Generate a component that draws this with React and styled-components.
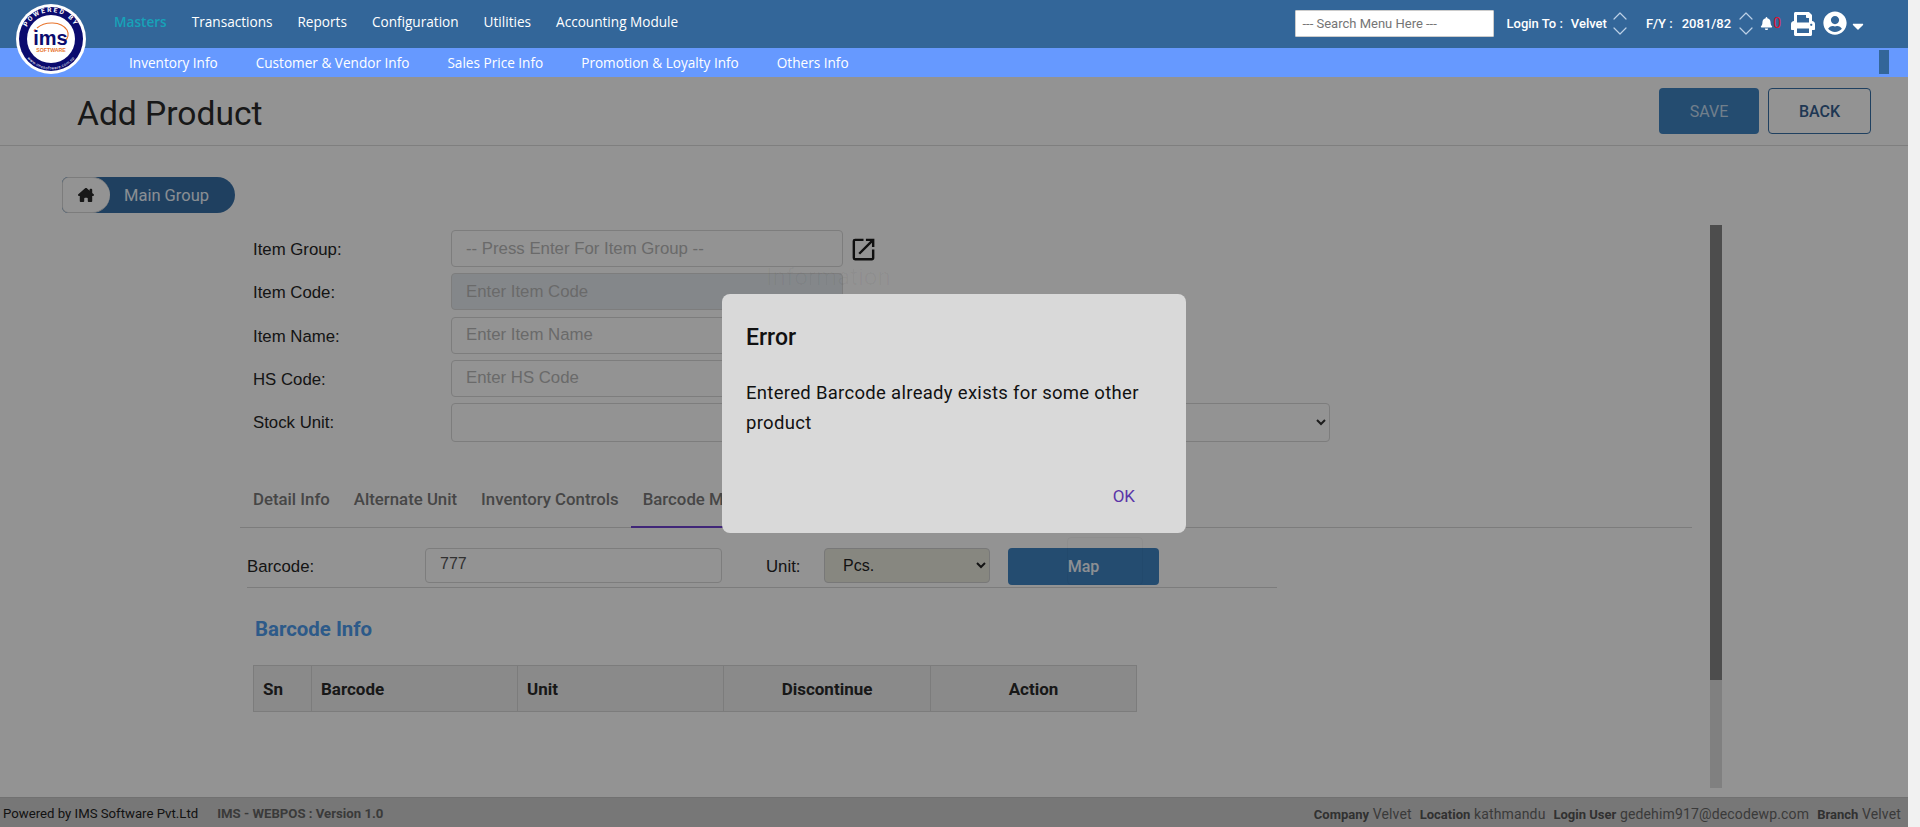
import React from "react";
import styled, { createGlobalStyle } from "styled-components";
import { FaBell, FaPrint, FaUserCircle, FaCaretDown } from "react-icons/fa";
import { FaHouseChimney } from "react-icons/fa6";
import { MdOpenInNew } from "react-icons/md";
import { LuChevronUp, LuChevronDown } from "react-icons/lu";

const Global = createGlobalStyle`
  html, body { margin: 0; padding: 0; background: #f1f1f1; overflow: hidden; }
  * { box-sizing: border-box; }
  body { font-family: Roboto, "Liberation Sans", sans-serif; }
`;

const Shell = styled.div`
  position: relative;
  width: 1908px;
  height: 827px;
  background: #fff;
  display: flex;
  flex-direction: column;
  overflow: hidden;
`;

const TopBar = styled.header`
  position: relative;
  z-index: 3;
  height: 48px;
  background: #336699;
  display: flex;
  align-items: center;
  padding: 0 41px 2px 114px;
  color: #fff;
`;

const LogoWrap = styled.div`
  position: absolute;
  left: 16px;
  top: 4px;
  width: 70px;
  height: 70px;
  z-index: 5;
`;

const MainNav = styled.nav`
  display: flex;
  gap: 25px;
  margin-top: -3px;
`;

const NavLink = styled.span`
  font-family: "Open Sans", sans-serif;
  font-size: 13.6px;
  font-weight: ${(p) => (p.$active ? 600 : 500)};
  color: ${(p) => (p.$active ? "#17a2b8" : "#fff")};
`;

const TopRight = styled.div`
  margin-left: auto;
  display: flex;
  align-items: center;
  font-size: 13px;
  font-weight: 500;
`;

const SearchBox = styled.input`
  width: 199px;
  height: 27px;
  border: 1px solid #ccc;
  border-radius: 1px;
  padding: 0 6px;
  font: 400 13px Roboto, sans-serif;
  color: #333;
  background: #fff;
  margin-right: 12px;
  &::placeholder { color: #757575; opacity: 1; }
`;

const Pair = styled.span`
  display: inline-flex;
  gap: ${(p) => p.$gap}px;
`;

const UpDown = styled.span`
  display: inline-flex;
  flex-direction: column;
  color: #bcd0e6;
  width: 16px;
  align-items: center;
  margin: 0 ${(p) => p.$right}px 0 ${(p) => p.$left}px;
  & svg { display: block; margin: -4.5px 0; stroke-width: 1.2; }
`;

const BellWrap = styled.span`
  display: inline-flex;
  align-items: center;
  margin-right: 10px;
  margin-left: 6px;
  font-size: 14px;
  font-weight: 400;
  color: #e0102f;
`;

const IconSlot = styled.span`
  display: inline-flex;
  color: #fff;
  margin-right: ${(p) => p.$gap || 0}px;
  margin-top: ${(p) => p.$top || 0}px;
`;

const SubBar = styled.div`
  position: relative;
  z-index: 3;
  height: 29px;
  background: #6699ff;
  display: flex;
  align-items: center;
  padding-left: 129px;
  gap: 38px;
  color: #fff;
`;

const SubLink = styled.span`
  font-family: "Open Sans", sans-serif;
  font-size: 13.6px;
  font-weight: 500;
`;

const SideToggle = styled.span`
  position: absolute;
  left: 1879px;
  top: 2px;
  width: 10px;
  height: 24px;
  background: #336699;
`;

const TitleBar = styled.div`
  height: 69px;
  border-bottom: 1px solid #dcdcdc;
  display: flex;
  align-items: center;
  justify-content: space-between;
  padding: 0 37px 0 77px;
`;

const Title = styled.h1`
  margin: 4px 0 0;
  font-size: 33.6px;
  font-weight: 400;
  color: #2b2b2b;
`;

const Actions = styled.div`
  display: flex;
  gap: 9px;
`;

const PrimaryButton = styled.button`
  width: 100px;
  height: 46px;
  border: 0;
  border-radius: 4px;
  background: #3f84c3;
  color: #c4dcf2;
  font: 400 16px Roboto, sans-serif;
`;

const OutlineButton = styled.button`
  width: 103px;
  height: 46px;
  border: 1px solid #366fa7;
  border-radius: 4px;
  background: transparent;
  color: #366090;
  font: 500 16px Roboto, sans-serif;
`;

const Crumb = styled.div`
  margin: 31px 0 0 62px;
  width: 173px;
  height: 36px;
  display: flex;
  align-items: center;
  background: #366fa7;
  border-radius: 18px;
  border-top-left-radius: 6px;
  border-bottom-left-radius: 6px;
  overflow: hidden;
  color: #eef7ff;
  font-size: 16.5px;
`;

const CrumbHome = styled.span`
  width: 48px;
  height: 36px;
  background: #fff;
  border: 1px solid #d8d8d8;
  border-right: 0;
  border-radius: 6px 18px 18px 6px;
  display: flex;
  align-items: center;
  padding-left: 15px;
  color: #2b2b2b;
  margin-right: 14px;
`;

const Main = styled.div`
  margin-top: 12px;
  display: flex;
  padding-left: 240px;
  height: 563px;
`;

const FormArea = styled.div`
  width: 1452px;
  padding-top: 5px;
`;

const ScrollTrack = styled.div`
  margin-left: 18px;
  width: 12px;
  height: 563px;
  background: #dedede;
`;

const ScrollThumb = styled.div`
  height: 455px;
  background: #868686;
`;

const FieldRow = styled.div`
  display: grid;
  grid-template-columns: 211px ${(p) => p.$w || 392}px 40px;
  height: 43.25px;
  align-items: start;
`;

const FieldLabel = styled.label`
  padding-left: 13px;
  font: 400 16.8px "Liberation Sans", sans-serif;
  line-height: 39px;
  color: #262626;
`;

const TextField = styled.input`
  height: 37px;
  width: 100%;
  border: 1px solid #d9d9d9;
  border-radius: 4px;
  background: ${(p) => (p.disabled ? "#e6ebf0" : "#fff")};
  padding: 0 14px;
  font: 400 16.8px "Liberation Sans", sans-serif;
  &::placeholder { color: #b8b8b8; opacity: 1; }
`;

const SelectField = styled.select`
  height: 39px;
  width: 100%;
  border: 1px solid #d9d9d9;
  border-radius: 4px;
  background: #fff;
  padding: 0 14px;
  font: 400 16.8px "Liberation Sans", sans-serif;
  color: #333;
`;

const OpenIcon = styled.span`
  display: flex;
  align-items: center;
  height: 39px;
  padding-left: 6px;
  color: #1a1a1a;
`;

const Tabs = styled.div`
  margin-top: 31px;
  height: 51px;
  display: flex;
  align-items: stretch;
  border-bottom: 1px solid #d8d8d8;
`;

const Tab = styled.div`
  padding: 4px 12px 0;
  height: 51px;
  font-size: 16.8px;
  font-weight: 500;
  line-height: 36px;
  color: #7a7a7a;
  white-space: nowrap;
  margin-left: ${(p) => (p.$first ? "1px" : 0)};
  border-bottom: 2px solid ${(p) => (p.$active ? "#6f42d0" : "transparent")};
`;

const BarcodeRow = styled.div`
  margin: 20px 0 0 7px;
  width: 1030px;
  height: 40px;
  border-bottom: 1px solid #d8d8d8;
  display: flex;
  align-items: flex-start;
`;

const InlineLabel = styled.label`
  font: 400 16.8px "Liberation Sans", sans-serif;
  line-height: 38px;
  color: #262626;
  width: ${(p) => p.$w}px;
  flex: none;
`;

const CodeInput = styled.input`
  width: 297px;
  height: 35px;
  flex: none;
  border: 1px solid #d9d9d9;
  border-radius: 4px;
  background: #fff;
  padding: 0 14px 4px;
  font: 400 16px "Liberation Sans", sans-serif;
  color: #555;
  margin-right: 44px;
`;

const UnitSelect = styled.select`
  width: 166px;
  height: 35px;
  flex: none;
  border: 1px solid #d0d0d0;
  border-radius: 4px;
  background: #ebebdf;
  padding: 0 14px;
  font: 400 16px "Liberation Sans", sans-serif;
  color: #222;
  margin-right: 18px;
`;

const MapButton = styled.button`
  width: 151px;
  height: 37px;
  border: 0;
  border-radius: 4px;
  background: #3f84c3;
  color: #f4f9ff;
  font: 500 16px Roboto, sans-serif;
`;

const SectionTitle = styled.h3`
  margin: 29px 0 0 15px;
  font: 700 20.4px Roboto, sans-serif;
  line-height: 24px;
  color: #4e9ced;
`;

const Table = styled.table`
  margin: 24px 0 0 13px;
  width: 883px;
  height: 47px;
  border-collapse: collapse;
  table-layout: fixed;
`;

const Th = styled.th`
  width: ${(p) => p.$w}px;
  border: 1px solid #d8d8d8;
  background: #f0f0f0;
  font: 700 17px Roboto, sans-serif;
  color: #2b2b2b;
  padding: 0 9px;
  text-align: ${(p) => (p.$center ? "center" : "left")};
`;

const Footer = styled.footer`
  margin-top: 9px;
  height: 30px;
  background: #cfcfcf;
  border-top: 1px solid #c4c4c4;
  display: flex;
  align-items: center;
  justify-content: space-between;
  padding: 2px 7px 0 3px;
  font-size: 13.2px;
  color: #555;
  white-space: pre;
`;

const FooterLeft = styled.div`
  display: flex;
  gap: 19px;
  color: #222;
`;

const Version = styled.b`
  color: #666;
  font-weight: 700;
`;

const FooterRight = styled.div`
  display: flex;
  gap: 8px;
  color: #666;
  font-size: 14px;
  letter-spacing: 0.15px;
  & b { color: #555; letter-spacing: 0; font-size: 13px; }
`;

const Backdrop = styled.div`
  position: absolute;
  inset: 0;
  z-index: 1;
  background: rgba(0, 0, 0, 0.425);
`;

const Dialog = styled.div`
  position: absolute;
  z-index: 2;
  left: 722px;
  top: 294px;
  width: 464px;
  height: 239px;
  background: #d9d9d9;
  border-radius: 8px;
  padding: 28px 24px 0;
  display: flex;
  flex-direction: column;
  color: #111;
`;

const DialogTitle = styled.h2`
  margin: 0;
  font-size: 23px;
  font-weight: 500;
  line-height: 32px;
`;

const DialogBody = styled.p`
  margin: 24px 0 0;
  font-size: 18.5px;
  line-height: 30px;
  letter-spacing: 0.3px;
`;

const DialogAction = styled.button`
  position: absolute;
  right: 51px;
  bottom: 27px;
  border: 0;
  padding: 0;
  background: none;
  color: #5a35a8;
  font: 400 17px Roboto, sans-serif;
`;

const Ghost = styled.div`
  position: absolute;
  z-index: 2;
  left: ${(p) => p.$x}px;
  top: ${(p) => p.$y}px;
  font-size: ${(p) => p.$s}px;
  line-height: 1;
  color: rgba(0, 0, 0, ${(p) => p.$a});
  white-space: pre;
`;

const GhostBox = styled.div`
  position: absolute;
  z-index: 2;
  left: 1067px;
  top: 537px;
  width: 76px;
  height: 48px;
  border: 1px solid rgba(0, 0, 0, 0.03);
  border-radius: 4px;
`;

function Logo() {
  return (
    <svg width="70" height="70" viewBox="0 0 70 70">
      <defs>
        <path id="logoTop" d="M8 35a27 27 0 0 1 54 0" />
        <path id="logoBottom" d="M4.5 35a30.5 30.5 0 0 0 61 0" />
      </defs>
      <circle cx="35" cy="35" r="35" fill="#fff" />
      <circle cx="35" cy="35" r="32" fill="#0b0b6e" />
      <circle cx="35" cy="35" r="24" fill="#fff" />
      <text fontFamily="Roboto" fontSize="6.5" fontWeight="700" fill="#fff" letterSpacing="2">
        <textPath href="#logoTop" startOffset="50%" textAnchor="middle">POWERED BY</textPath>
      </text>
      <text fontFamily="Roboto" fontSize="4" fill="#fff" letterSpacing="0.35">
        <textPath href="#logoBottom" startOffset="50%" textAnchor="middle">www.imssoftware.com.np</textPath>
      </text>
      <path d="M21 24c8-7 24-7 30 2 2 4 1 8-2 11" fill="none" stroke="#e8742c" strokeWidth="1.1" />
      <circle cx="19" cy="26.5" r="1.3" fill="#e8742c" />
      <text x="34.5" y="41" textAnchor="middle" fontFamily="Liberation Sans" fontWeight="700" fontSize="20" fill="#0b0b6e">ims</text>
      <text x="35" y="47.5" textAnchor="middle" fontFamily="Liberation Sans" fontWeight="700" fontSize="5.2" fill="#e8742c">SOFTWARE</text>
    </svg>
  );
}

const columns = [
  { label: "Sn", w: 58 },
  { label: "Barcode", w: 206 },
  { label: "Unit", w: 206 },
  { label: "Discontinue", w: 207, center: true },
  { label: "Action", w: 206, center: true },
];

export default function App() {
  return (
    <Shell>
      <Global />
      <LogoWrap><Logo /></LogoWrap>
      <TopBar>
        <MainNav>
          <NavLink $active>Masters</NavLink>
          <NavLink>Transactions</NavLink>
          <NavLink>Reports</NavLink>
          <NavLink>Configuration</NavLink>
          <NavLink>Utilities</NavLink>
          <NavLink>Accounting Module</NavLink>
        </MainNav>
        <TopRight>
          <SearchBox placeholder="--- Search Menu Here ---" />
          <Pair $gap={8}><span>Login To :</span><span>Velvet</span></Pair>
          <UpDown $left={5} $right={18}><LuChevronUp size={24} /><LuChevronDown size={24} /></UpDown>
          <Pair $gap={9}><span>F/Y :</span><span>2081/82</span></Pair>
          <UpDown $left={7} $right={0}><LuChevronUp size={24} /><LuChevronDown size={24} /></UpDown>
          <BellWrap><FaBell size={13} color="#fff" />0</BellWrap>
          <IconSlot $gap={8} $top={2}><FaPrint size={24} /></IconSlot>
          <IconSlot $gap={2}><FaUserCircle size={24} /></IconSlot>
          <IconSlot $top={5}><FaCaretDown size={18} /></IconSlot>
        </TopRight>
      </TopBar>
      <SubBar>
        <SubLink>Inventory Info</SubLink>
        <SubLink>Customer &amp; Vendor Info</SubLink>
        <SubLink>Sales Price Info</SubLink>
        <SubLink>Promotion &amp; Loyalty Info</SubLink>
        <SubLink>Others Info</SubLink>
        <SideToggle />
      </SubBar>
      <TitleBar>
        <Title>Add Product</Title>
        <Actions>
          <PrimaryButton>SAVE</PrimaryButton>
          <OutlineButton>BACK</OutlineButton>
        </Actions>
      </TitleBar>
      <Crumb>
        <CrumbHome><FaHouseChimney size={16} /></CrumbHome>
        Main Group
      </Crumb>
      <Main>
        <FormArea>
          <FieldRow>
            <FieldLabel>Item Group:</FieldLabel>
            <TextField placeholder="-- Press Enter For Item Group --" />
            <OpenIcon><MdOpenInNew size={29} /></OpenIcon>
          </FieldRow>
          <FieldRow>
            <FieldLabel>Item Code:</FieldLabel>
            <TextField disabled placeholder="Enter Item Code" />
          </FieldRow>
          <FieldRow>
            <FieldLabel>Item Name:</FieldLabel>
            <TextField placeholder="Enter Item Name" />
          </FieldRow>
          <FieldRow>
            <FieldLabel>HS Code:</FieldLabel>
            <TextField placeholder="Enter HS Code" />
          </FieldRow>
          <FieldRow $w={879}>
            <FieldLabel>Stock Unit:</FieldLabel>
            <SelectField><option></option></SelectField>
          </FieldRow>
          <Tabs>
            <Tab $first>Detail Info</Tab>
            <Tab>Alternate Unit</Tab>
            <Tab>Inventory Controls</Tab>
            <Tab $active>Barcode Mapping</Tab>
          </Tabs>
          <BarcodeRow>
            <InlineLabel $w={178}>Barcode:</InlineLabel>
            <CodeInput defaultValue="777" />
            <InlineLabel $w={58}>Unit:</InlineLabel>
            <UnitSelect defaultValue="pcs"><option value="pcs">Pcs.</option></UnitSelect>
            <MapButton>Map</MapButton>
          </BarcodeRow>
          <SectionTitle>Barcode Info</SectionTitle>
          <Table>
            <thead>
              <tr>
                {columns.map((c) => (
                  <Th key={c.label} $w={c.w} $center={c.center}>{c.label}</Th>
                ))}
              </tr>
            </thead>
          </Table>
        </FormArea>
        <ScrollTrack><ScrollThumb /></ScrollTrack>
      </Main>
      <Footer>
        <FooterLeft>
          <span>Powered by IMS Software Pvt.Ltd</span>
          <Version>IMS - WEBPOS : Version 1.0</Version>
        </FooterLeft>
        <FooterRight>
          <span><b>Company</b> Velvet</span>
          <span><b>Location</b> kathmandu</span>
          <span><b>Login User</b> gedehim917@decodewp.com</span>
          <span><b>Branch</b> Velvet</span>
        </FooterRight>
      </Footer>
      <Backdrop />
      <Dialog>
        <DialogTitle>Error</DialogTitle>
        <DialogBody>Entered Barcode already exists for some other product</DialogBody>
        <DialogAction>OK</DialogAction>
      </Dialog>
      <Ghost $a={0.03} $x={766} $y={265} $s={24}>Information</Ghost>
      <Ghost $a={0.025} $x={772} $y={329} $s={33}>Data Saved</Ghost>
      <Ghost $a={0.02} $x={772} $y={367} $s={33}>Successfully!!</Ghost>
      <Ghost $a={0.015} $x={764} $y={416} $s={20}>Name: tested5</Ghost>
      <Ghost $a={0.015} $x={764} $y={445} $s={20}>Code: 117</Ghost>
      <Ghost $a={0.015} $x={764} $y={472} $s={20}>CRate: 150   SRate: 180</Ghost>
      <GhostBox />
    </Shell>
  );
}
